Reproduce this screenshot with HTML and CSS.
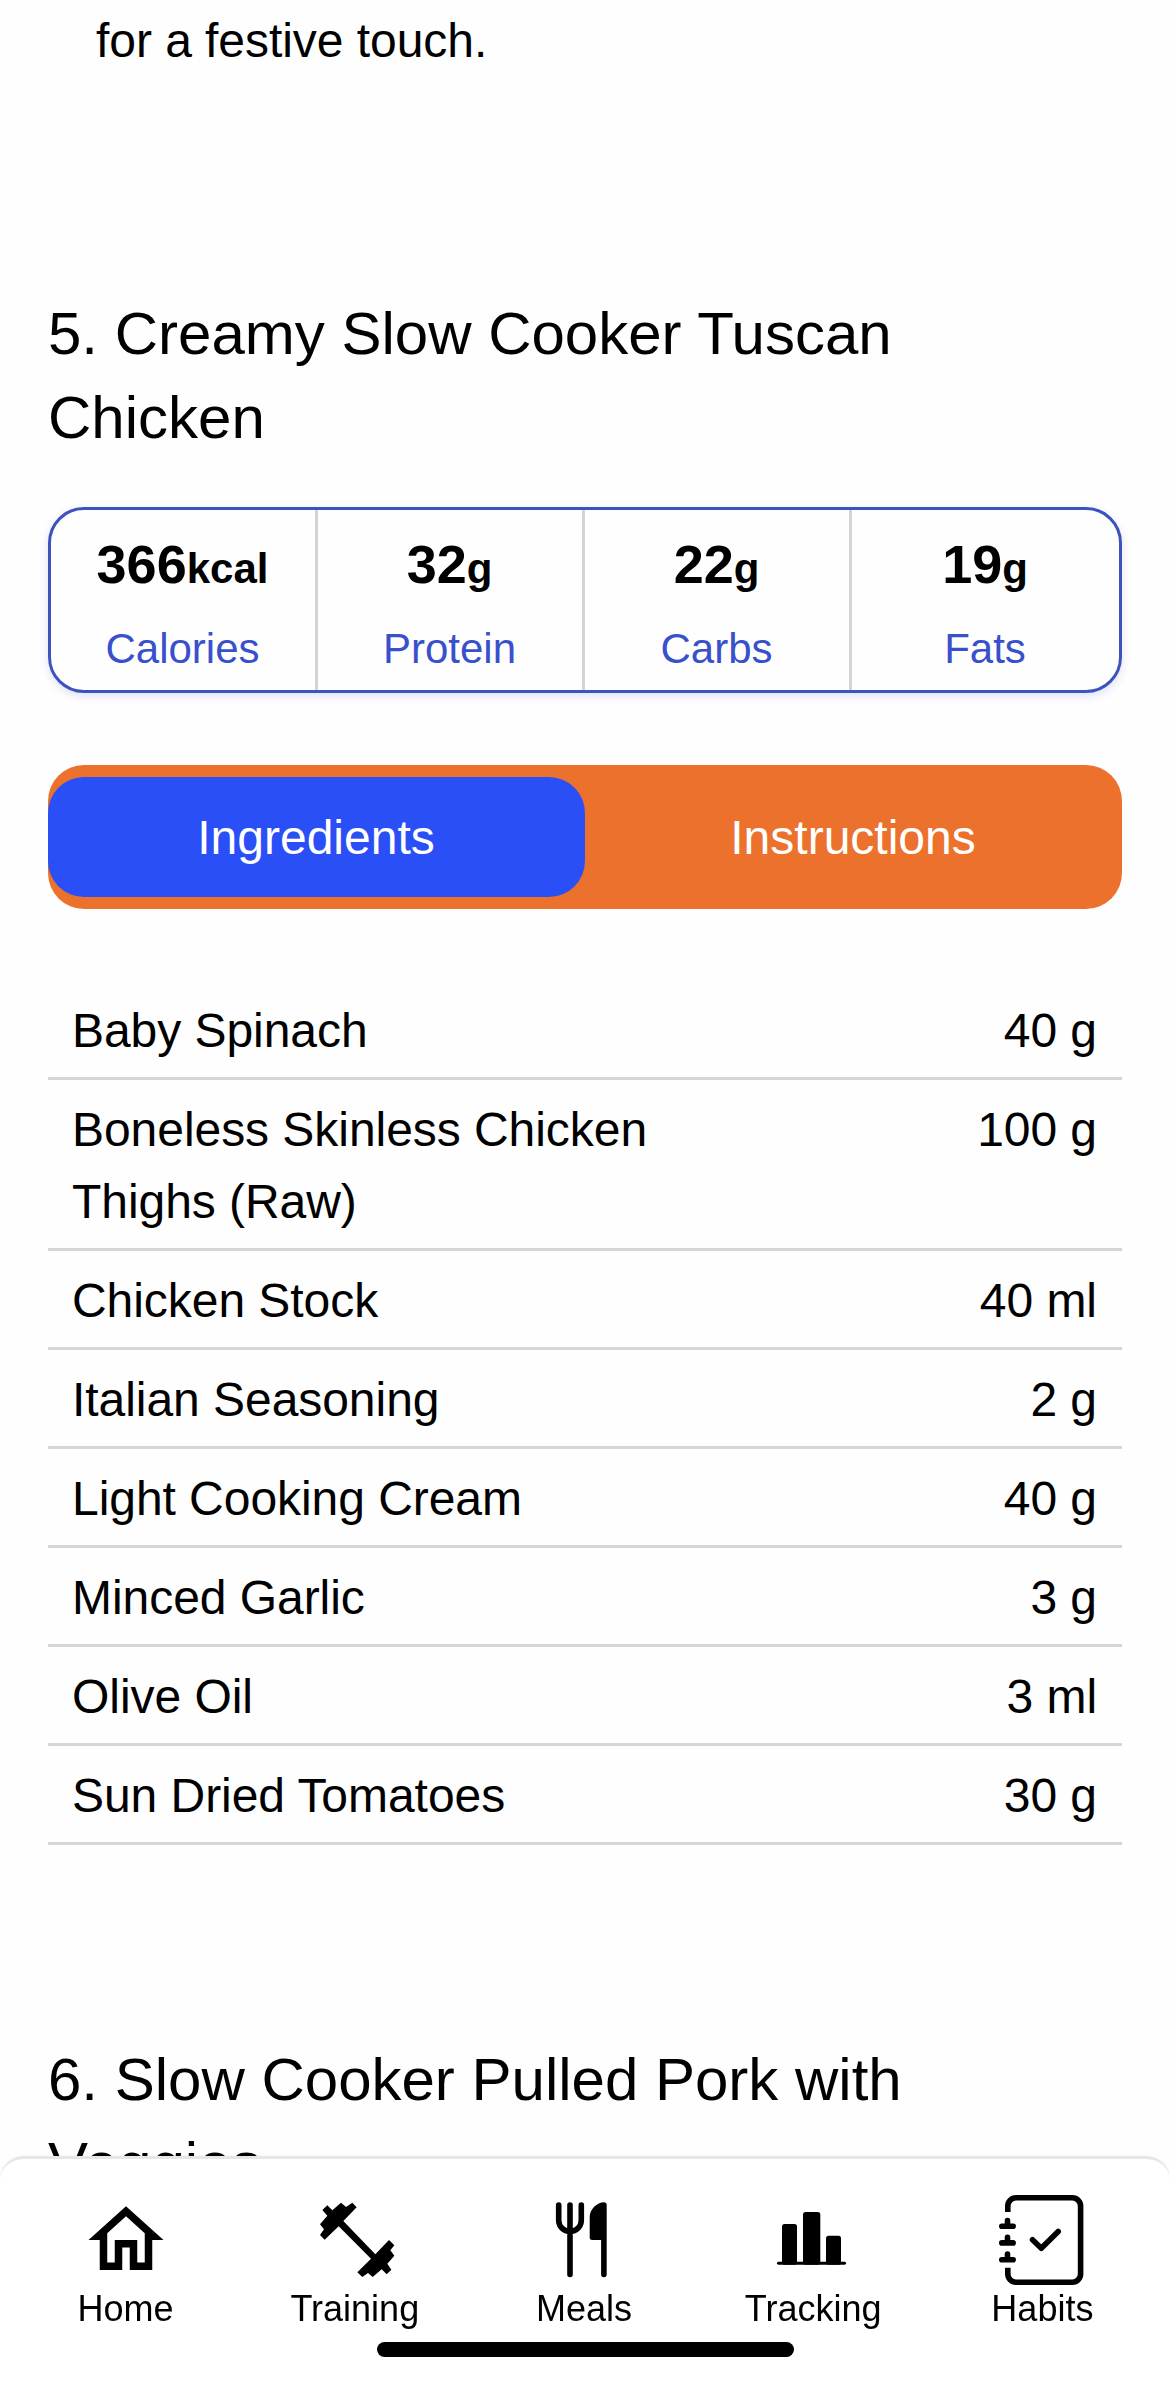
FILE: index.html
```html
<!DOCTYPE html>
<html lang="en">
<head>
<meta charset="utf-8">
<title>Meals</title>
<link rel="stylesheet" href="styles.css">
</head>
<body>
<main class="content">
  <p class="tip">for a festive touch.</p>

  <section class="recipe">
    <h2 class="recipe-title">5. Creamy Slow Cooker Tuscan Chicken</h2>
    <div class="macros">
      <div class="macro"><div class="macro-value">366<small>kcal</small></div><div class="macro-label">Calories</div></div>
      <div class="macro"><div class="macro-value">32<small>g</small></div><div class="macro-label">Protein</div></div>
      <div class="macro"><div class="macro-value">22<small>g</small></div><div class="macro-label">Carbs</div></div>
      <div class="macro"><div class="macro-value">19<small>g</small></div><div class="macro-label">Fats</div></div>
    </div>
    <div class="tabs">
      <div class="tab tab-active">Ingredients</div>
      <div class="tab">Instructions</div>
    </div>
    <ul class="ingredients">
      <li><span class="name">Baby Spinach</span><span>40 g</span></li>
      <li><span class="name">Boneless Skinless Chicken Thighs (Raw)</span><span>100 g</span></li>
      <li><span class="name">Chicken Stock</span><span>40 ml</span></li>
      <li><span class="name">Italian Seasoning</span><span>2 g</span></li>
      <li><span class="name">Light Cooking Cream</span><span>40 g</span></li>
      <li><span class="name">Minced Garlic</span><span>3 g</span></li>
      <li><span class="name">Olive Oil</span><span>3 ml</span></li>
      <li><span class="name">Sun Dried Tomatoes</span><span>30 g</span></li>
    </ul>
  </section>

  <section class="recipe">
    <h2 class="recipe-title">6. Slow Cooker Pulled Pork with Veggies</h2>
  </section>
</main>

<nav class="navbar">
  <div class="nav-items">
    <a class="nav-item">
      <svg class="icon" viewBox="0 0 24 24"><path d="M12 5.69 17 10.19V18H15V12H9V18H7V10.19L12 5.69M12 3 2 12H5V20H11V14H13V20H19V12H22"/></svg>
      <span>Home</span>
    </a>
    <a class="nav-item">
      <svg class="icon" viewBox="120 195 270 270"><path d="M172 226 187 241 213 218 228 231 247 218 260 232 220 273 316 373 357 330 373 346 361 361 373 377 352 401 364 419 350 433 335 418 308 441 294 429 277 441 262 427 303 386 206 289 164 329 150 315 162 298 150 283 172 257 157 240Z"/></svg>
      <span>Training</span>
    </a>
    <a class="nav-item">
      <svg class="icon" viewBox="0 0 90 90"><g class="line"><path d="M19.7 10.1V25.3a11.3 11.3 0 0 0 22.6 0V10.1M31 10.1V79.5"/></g><path d="M65 7.3Q67.7 7.3 67.7 10V79.5a2.8 2.8 0 0 1-5.6 0V45H53.2Q50.7 45 50.7 42.5V22C50.7 14.5 58 7.3 65 7.3Z"/></svg>
      <span>Meals</span>
    </a>
    <a class="nav-item">
      <svg class="icon" viewBox="0 0 90 90"><rect x="14" y="29" width="15" height="40.7" rx="2.5"/><rect x="35" y="17" width="17.3" height="52.7" rx="2.5"/><rect x="58" y="40.7" width="15" height="29" rx="2.5"/><rect x="9" y="66.8" width="69" height="2.9" rx="1.4"/></svg>
      <span>Tracking</span>
    </a>
    <a class="nav-item">
      <svg class="icon" viewBox="0 0 90 90"><path class="outline" d="M10.8 17V11a8.2 8.2 0 0 1 8.2-8.2H75.4a8.2 8.2 0 0 1 8.2 8.2V79a8.2 8.2 0 0 1-8.2 8.2H19a8.2 8.2 0 0 1-8.2-8.2V72.7"/><path class="line" d="M4.8 31.2H16.2M10.5 25.5V31M4.8 47.9H16.2M10.5 42.2V47.7M4.8 64.8H16.2M10.5 59.1V64.6M35.5 44.8 44.3 53.3 61.2 36.5"/></svg>
      <span>Habits</span>
    </a>
  </div>
  <div class="home-indicator"></div>
</nav>
</body>
</html>
```
FILE: styles.css
```css
* { box-sizing: border-box; }

body {
  margin: 0;
  height: 2381px;
  overflow: hidden;
  background: #fefefe;
  color: #000;
  font: 48px/72px "Liberation Sans", Arial, sans-serif;
}

.content { padding: 5px 48px 0; }

.tip { margin: 0 0 214px; padding-left: 48px; letter-spacing: -0.05px; }

.recipe { margin-bottom: 192px; }

.recipe-title {
  margin: 0;
  padding: 1px 0 47px;
  max-width: 900px;
  font-size: 60px;
  font-weight: 400;
  line-height: 84px;
}

.macros {
  display: grid;
  grid-template-columns: repeat(4, 1fr);
  height: 186px;
  margin-bottom: 72px;
  border: 3px solid #3c53bd;
  border-radius: 36px;
  box-shadow: 0 3px 9px rgba(60, 70, 220, 0.16);
  text-align: center;
}

.macro { padding: 14px 1px 0 0; border-right: 3px solid #d4d4d4; }
.macro:last-child { border-right: 0; }

.macro-value {
  height: 81px;
  margin-bottom: 12px;
  font-size: 54px;
  font-weight: 700;
  line-height: 81px;
}
.macro-value small { font-size: 42px; line-height: 1; }

.macro-label { color: #3850cc; font-size: 42px; line-height: 63px; }

.tabs {
  display: grid;
  grid-template-columns: 1fr 1fr;
  height: 144px;
  padding: 12px 0;
  margin-bottom: 72px;
  border-radius: 36px;
  background: #ec712d;
  color: #fff;
  text-align: center;
}
.tab { height: 120px; padding-right: 1px; border-radius: 36px; line-height: 122px; }
.tab-active { background: #2b4ff6; }

.ingredients { margin: 0; padding: 0; list-style: none; }
.ingredients li {
  display: flex;
  justify-content: space-between;
  padding: 14px 25px 10px 24px;
  border-bottom: 3px solid #d5d5d5;
  letter-spacing: -0.05px;
}
.name { max-width: 640px; }

.navbar {
  position: fixed;
  right: 0;
  bottom: 0;
  left: 0;
  height: 225px;
  padding-top: 36px;
  border-top: 3px solid #e6e6e6;
  border-radius: 24px 24px 0 0;
  background: #fff;
  box-shadow: 0 0 4px rgba(0, 0, 0, 0.04);
}
.nav-items {
  display: grid;
  grid-template-columns: repeat(5, 1fr);
  padding: 0 13px 0 11px;
}
.nav-item {
  display: flex;
  flex-direction: column;
  align-items: center;
  font-size: 36px;
  line-height: 48px;
}
.icon { display: block; width: 90px; height: 90px; }
.line, .outline { fill: none; stroke: #000; stroke-width: 5.6; }
.line { stroke-linecap: round; stroke-linejoin: round; }

.home-indicator {
  width: 417px;
  height: 15px;
  margin: 9px auto 0;
  border-radius: 8px;
  background: #000;
}
```
